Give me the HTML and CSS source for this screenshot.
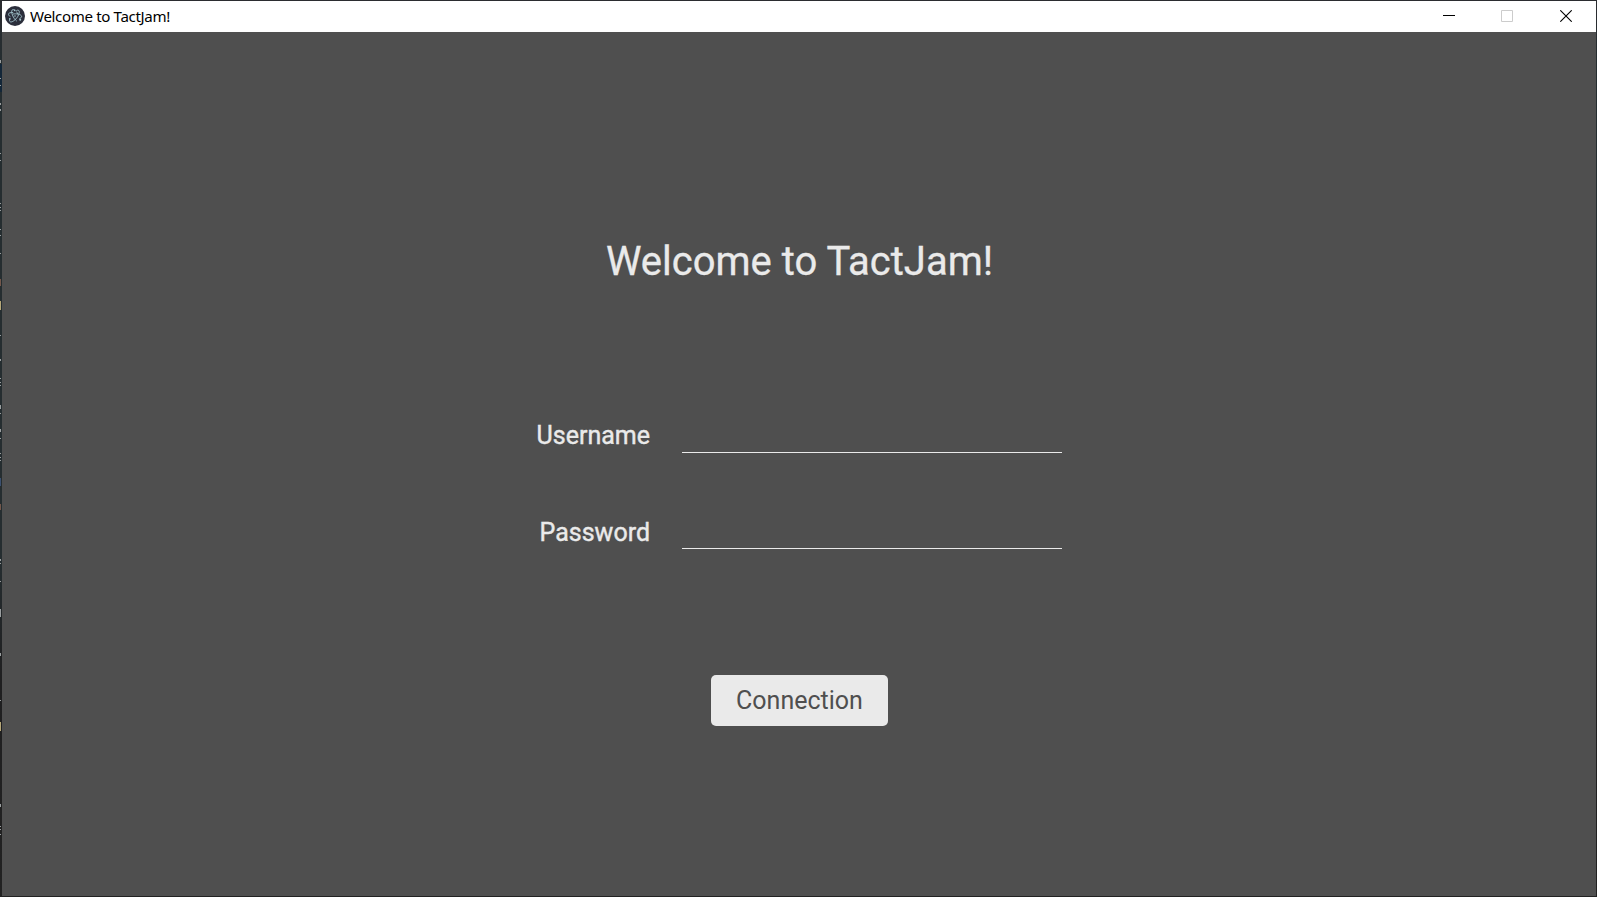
FILE: index.html
```html
<!DOCTYPE html>
<html lang="en">
<head>
<meta charset="utf-8">
<title>Welcome to TactJam!</title>
<link rel="stylesheet" href="styles.css">
</head>
<body>
<div class="window">
  <header class="titlebar">
    <svg class="app-icon" width="20" height="20" viewBox="0 0 20 20">
      <circle cx="10" cy="10" r="10" fill="#2b2e3b"/>
      <g fill="none" stroke="#a5c6cf" stroke-width=".9">
        <path d="M8.200 6.600C5.300 6.300 3.400 7 3.500 8.300C3.600 9.200 4.300 10 5.400 10.800M7.800 8.100C11.300 7.300 16.500 8.300 16.600 10.500C16.600 11.400 15.700 12.100 14.500 12.500"/>
        <path d="M9.800 4.200C9 3.500 7.800 3.300 7.200 3.900C5.900 5.100 7 9.200 9.200 12.400C10 13.500 10.900 14.500 11.800 15.100M12.900 8.300C12.500 7.200 12 6.300 11.300 5.500"/>
        <path d="M4.800 12.900C4.300 14.200 4.400 15.300 5.300 15.800C7 16.600 10.500 14 12.700 10.600C14.300 7.900 14.900 5.100 13.600 4.300C12.900 3.900 12.100 4.200 11.200 4.800"/>
      </g>
      <g fill="#a5c6cf"><circle cx="10" cy="10" r=".8"/><circle cx="4.800" cy="12.800" r=".9"/><circle cx="15.200" cy="13.700" r="1"/><circle cx="9.700" cy="4.300" r=".9"/></g>
    </svg>
    <span class="caption">Welcome to TactJam!</span>
    <div class="controls">
      <svg width="12" height="12" viewBox="0 0 12 12"><path d="M0 5.500h12" stroke="#000"/></svg>
      <svg width="12" height="12" viewBox="0 0 12 12"><path d="M.5.5h11v11H.5z" fill="none" stroke="#ccc"/></svg>
      <svg width="12" height="12" viewBox="0 0 12 12"><path d="M.3.3l11.400 11.400M11.700.3L.3 11.700" stroke="#000" stroke-width="1.100"/></svg>
    </div>
  </header>
  <main class="login">
    <h1 class="heading">Welcome to TactJam!</h1>
    <form class="form">
      <label class="label" for="user">Username</label>
      <input class="field" id="user" type="text">
      <label class="label label-low" for="pass">Password</label>
      <input class="field" id="pass" type="password">
    </form>
    <button class="submit" type="button">Connection</button>
  </main>
</div>
<svg class="backdrop" width="2" height="897" viewBox="0 0 2 897">
  <path fill="#132638" d="M0 64h2v28H0z"/>
  <g fill="#9a9e9f"><path d="M0 60h1v3H0zM0 78h1v1H0zM0 85h1v1H0zM0 103h1v2H0zM0 109h1v2H0zM0 153h1v1H0zM0 160h1v1H0zM0 203h1v1H0zM0 207h1v1H0zM0 210h1v1H0zM0 229h1v1H0zM0 235h1v1H0zM0 253h1v1H0zM0 335h1v1H0zM0 359h1v2H0zM0 378h1v1H0zM0 382h1v1H0zM0 385h1v1H0zM0 405h1v4H0zM0 413h1v1H0zM0 429h1v3H0zM0 438h1v1H0zM0 453h1v1H0zM0 457h1v1H0zM0 460h1v1H0zM0 559h1v2H0zM0 563h1v1H0zM0 581h1v1H0zM0 609h1v8H0zM0 653h1v3H0zM0 700h1v1H0zM0 804h1v3H0zM0 826h1v1H0zM0 829h1v1H0zM0 834h1v1H0z"/></g>
  <path fill="#73574b" d="M0 279h1v7H0zM0 504h1v6H0z"/>
  <path fill="#b6a778" d="M0 301h1v9H0zM0 722h1v9H0z"/>
  <path fill="#3b5070" d="M0 478h1v8H0z"/>
</svg>
</body>
</html>
```
FILE: styles.css
```css
* { box-sizing: border-box; }
body {
  margin: 0;
  height: 897px;
  overflow: hidden;
  background: linear-gradient(#2b2c30 0, #252d30 60px, #252d30 560px, #1f1f20 680px, #222 100%);
  font-family: Roboto, sans-serif;
}
.window {
  display: flex;
  flex-direction: column;
  height: 896px;
  padding: 1px 1px 0 2px;
}
.titlebar {
  display: flex;
  align-items: center;
  height: 31px;
  padding: 0 24px 2px 3px;
  background: #fff;
}
.app-icon { margin-top: 1px; }
.caption {
  margin-left: 5px;
  font: 15.1px "Noto Sans", sans-serif;
  letter-spacing: -0.36px;
  color: #000;
}
.controls {
  display: flex;
  gap: 46px;
  margin-left: auto;
}
.controls svg { display: block; }
.controls svg:last-child { margin-left: 1px; }
.login {
  display: flex;
  flex: 1;
  flex-direction: column;
  align-items: center;
  padding-top: 206px;
  background: #4f4f4f;
}
.heading {
  margin: 0;
  padding-left: 1px;
  font-size: 40px;
  font-weight: 400;
  line-height: 48px;
  color: #eaeaea;
  -webkit-text-stroke: 0.3px #eaeaea;
}
.form {
  display: grid;
  grid-template-columns: 114px 380px;
  column-gap: 32px;
  row-gap: 60px;
  margin-top: 131px;
}
.label {
  justify-self: end;
  padding-top: 1px;
  font-size: 25px;
  font-weight: 400;
  line-height: 36px;
  height: 36px;
  white-space: nowrap;
  color: #eaeaea;
  -webkit-text-stroke: 0.4px #eaeaea;
}
.label-low { padding-top: 2px; }
.field {
  width: 380px;
  height: 36px;
  padding: 0;
  border: 0;
  border-bottom: 1px solid #eaeaea;
  outline: 0;
  background: transparent;
  color: #eaeaea;
  font: 25px Roboto, sans-serif;
}
.submit {
  width: 177px;
  height: 51px;
  margin-top: 126px;
  padding: 0 0 0 1px;
  border: 0;
  border-radius: 5px;
  background: #eaeaea;
  color: #4f4f4f;
  font: 25px Roboto, sans-serif;
}
.backdrop {
  position: absolute;
  top: 0;
  left: 0;
}
```
